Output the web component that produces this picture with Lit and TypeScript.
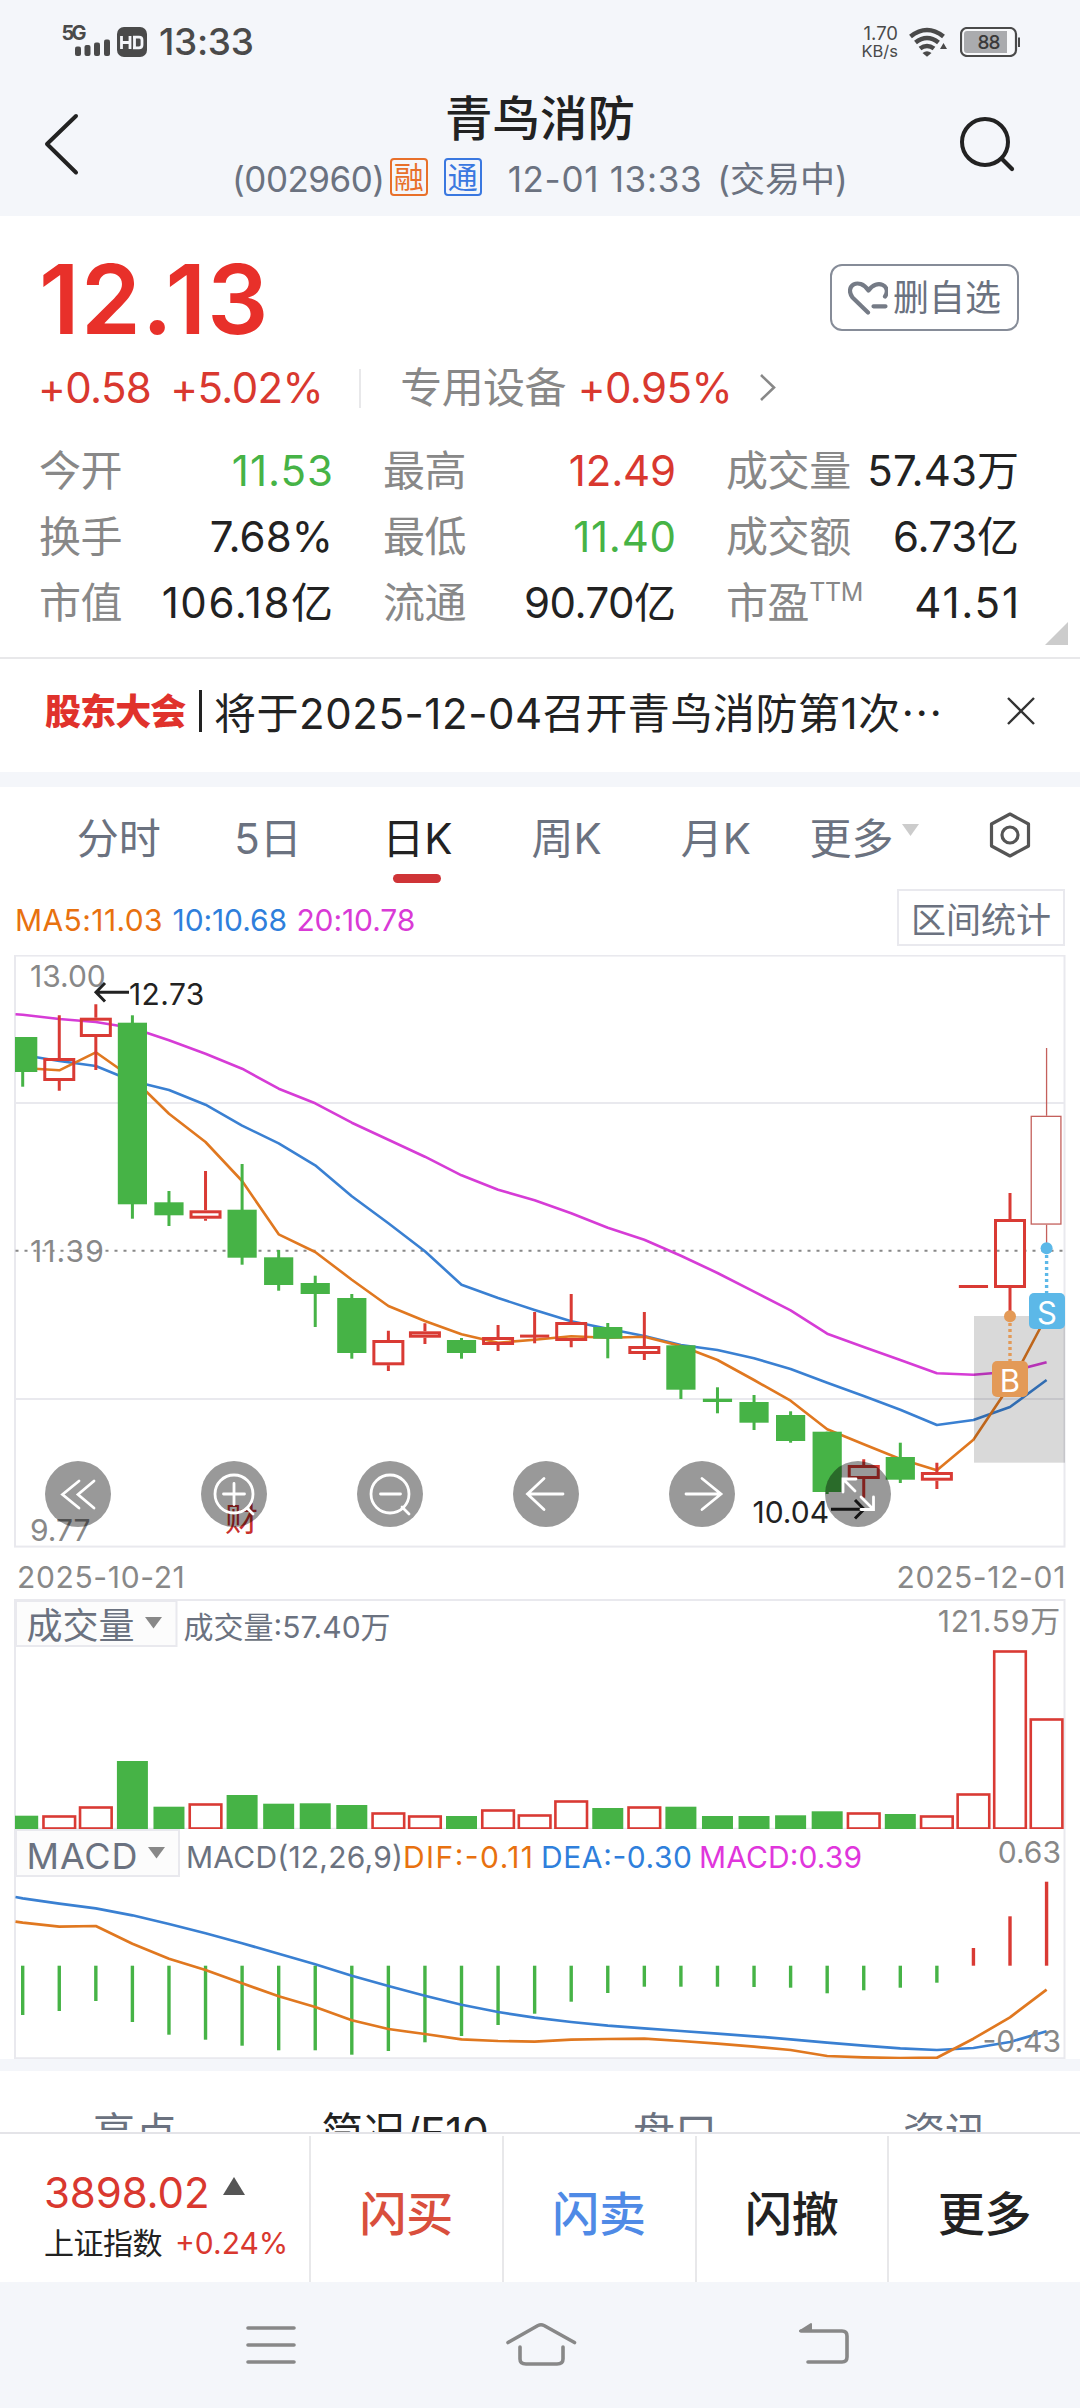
import { LitElement, html, svg, css } from "lit";
import { customElement } from "lit/decorators.js";
import { classMap } from "lit/directives/class-map.js";
import { styleMap } from "lit/directives/style-map.js";

const FIRST_X = 22.7;
const STEP = 36.567;
const PLOT_LEFT = 15;
const cx = (i: number) => FIRST_X + STEP * i;

const RED = "#d93a34";
const GREEN = "#46b346";

type Candle = {
  up: boolean;
  top: number;
  bottom: number;
  high: number;
  low: number;
  thin: boolean;
};

// Rows are [direction, body top, body bottom, wick top, wick bottom] in chart units.
const rawCandles: [string, number, number, number, number][] = [
  ["g", 1037, 1072, 1037, 1086.7],
  ["r", 1058, 1081, 1015.3, 1090.7],
  ["r", 1017.7, 1037, 1004.3, 1070],
  ["g", 1022.7, 1204.3, 1015.3, 1218.7],
  ["g", 1202.3, 1215.3, 1191, 1226],
  ["r", 1210.3, 1218.7, 1171, 1220.7],
  ["g", 1209.7, 1257.7, 1164, 1264.7],
  ["g", 1257.3, 1285, 1250, 1290.7],
  ["g", 1283, 1294, 1275.7, 1327],
  ["g", 1298, 1353, 1294, 1358.7],
  ["r", 1340, 1365.3, 1330.7, 1371],
  ["r", 1331.3, 1337.7, 1323.3, 1344],
  ["g", 1340, 1353, 1338, 1358.7],
  ["r", 1337, 1345, 1325, 1351],
  ["r", 1334.6, 1337.6, 1312, 1343.3],
  ["r", 1322, 1341, 1294, 1347.3],
  ["g", 1327, 1338.7, 1323, 1358.3],
  ["r", 1346, 1354, 1312, 1360],
  ["g", 1345.3, 1389.7, 1345, 1399],
  ["g", 1398.7, 1402, 1387.3, 1413.3],
  ["g", 1402, 1422.7, 1395, 1430],
  ["g", 1415, 1441, 1411.3, 1442.7],
  ["g", 1431.7, 1492, 1431.7, 1494],
  ["r", 1465, 1479, 1459.3, 1497.7],
  ["g", 1457, 1479.7, 1442.7, 1483],
  ["r", 1472, 1480.7, 1462.7, 1489],
  ["r", 1285, 1288, 1285, 1288],
  ["r", 1219, 1288, 1193, 1316],
  ["t", 1115.7, 1224.7, 1048, 1248],
];

const candles: Candle[] = rawCandles.map(([d, top, bottom, high, low]) => ({
  up: d !== "g",
  thin: d === "t",
  top,
  bottom,
  high,
  low,
}));

const ma5 = [1068, 1070.3, 1052.3, 1078, 1113.7, 1142, 1181, 1234.3, 1252, 1279.7, 1306, 1321, 1334.3, 1342.7, 1339.7, 1336.3, 1337.7, 1336.7, 1346, 1360, 1380, 1400.7, 1429.3, 1444.3, 1459, 1470.3, 1439.7, 1385, 1316];
const ma10 = [1055, 1061, 1066, 1081, 1090, 1104.7, 1125.7, 1143.3, 1165.3, 1196.3, 1223.3, 1251.3, 1284.7, 1298, 1310, 1321.3, 1328.7, 1336, 1345, 1350, 1358.3, 1369, 1382.7, 1396, 1409.7, 1425, 1420, 1407, 1380];
const ma20 = [1014.7, 1019, 1022, 1028, 1040.3, 1053.7, 1068.7, 1088.7, 1103.3, 1122.7, 1139.7, 1156.7, 1175.3, 1189.7, 1200.3, 1213.3, 1227.7, 1239.7, 1255.7, 1273, 1291.7, 1310.3, 1333.7, 1347, 1360, 1373.3, 1374.7, 1371.7, 1362.3];

const volumeTops = [1815.7, 1815, 1806, 1761, 1806.7, 1803, 1795, 1803.7, 1803.3, 1805, 1812, 1815, 1816, 1809, 1814, 1800, 1808, 1806, 1806.7, 1816, 1816, 1815.3, 1811.3, 1812, 1814, 1815, 1793, 1650, 1718];

const macdEnds = [2015, 2011, 2001, 2022, 2034.7, 2039.7, 2045.7, 2050.3, 2050.3, 2054.7, 2051, 2042.3, 2036, 2025, 2013.7, 2001.7, 1993, 1986.7, 1986.7, 1986.7, 1987, 1987.7, 1993.3, 1990.3, 1987.7, 1982.7, 1948, 1916.3, 1881.7];
const dea = [1898.3, 1903.7, 1908.3, 1915.3, 1924, 1933.3, 1943.3, 1953.7, 1964.3, 1975.7, 1986, 1995.7, 2004.7, 2012, 2017.7, 2022, 2025.7, 2028.3, 2031, 2033.7, 2036.3, 2039.3, 2042.7, 2045.7, 2048.3, 2050, 2048, 2042, 2031.3];
const dif = [1922.7, 1926.7, 1926, 1943.7, 1958.7, 1970, 1983.3, 1996.3, 2007, 2020.3, 2029, 2034, 2039.3, 2041, 2041.7, 2039.7, 2039, 2038.7, 2041, 2043.7, 2046.7, 2050, 2056, 2057.3, 2058, 2057.7, 2038.7, 2017.3, 1989.7];

const path = (ys: number[], startY: number) =>
  `M15.5 ${startY}` + ys.map((y, i) => `L${cx(i).toFixed(1)} ${y}`).join("");

const fonts = css`
  :host {
    font-family: Inter, "Noto Sans CJK SC", sans-serif;
  }
  svg {
    display: block;
  }
  text {
    font-family: Inter, "Noto Sans CJK SC", sans-serif;
  }
`;

@customElement("price-chart")
export class PriceChart extends LitElement {
  static styles = [
    fonts,
    css`
      :host {
        display: block;
        position: relative;
        height: 593px;
      }
      .controls {
        position: absolute;
        left: 45px;
        top: 506px;
        display: flex;
        gap: 90px;
      }
      .control {
        width: 66px;
        height: 66px;
        border-radius: 50%;
        background: rgba(0, 0, 0, 0.4);
      }
      .axis {
        fill: #888;
        font-size: 30px;
      }
      .mid {
        letter-spacing: 1.1px;
      }
      .mark {
        fill: #222;
        font-size: 30px;
      }
      .event {
        fill: #c8302c;
        font-size: 33px;
      }
      .badge {
        fill: #fff;
        font-size: 31px;
        text-anchor: middle;
      }
    `,
  ];

  private candle(c: Candle, i: number) {
    const x = cx(i);
    if (!c.up) {
      const left = Math.max(x - 14.6, PLOT_LEFT);
      return svg`<g fill=${GREEN}>
        <rect x=${x - 1.5} y=${c.high} width="3" height=${c.low - c.high}></rect>
        <rect x=${left} y=${c.top} width=${x + 14.6 - left} height=${c.bottom - c.top}></rect>
      </g>`;
    }
    const w = c.thin ? 1.3 : 3;
    const color = c.thin ? "#c4605c" : RED;
    if (c.bottom - c.top < 4) {
      return svg`<g fill=${color}>
        <rect x=${x - 14.6} y=${c.top} width="29.2" height="3"></rect>
        <rect x=${x - 1.5} y=${c.high} width="3" height=${c.low - c.high}></rect>
      </g>`;
    }
    return svg`<g fill="none" stroke=${color} stroke-width=${w}>
      <rect x=${x - 16 + w / 2} y=${c.top + w / 2} width=${(c.thin ? 31 : 32) - w} height=${c.bottom - c.top - w}></rect>
      <path d="M${x} ${c.high}V${c.top}M${x} ${c.bottom}V${c.low}"></path>
    </g>`;
  }

  private controlIcons = [
    svg`<path d="M34 20L17.500 33.500L34 47M49 20L33 33.500L49 47"></path>`,
    svg`<circle cx="33" cy="33" r="19"></circle><path d="M33 22.500V43.500M22.500 33H43.500M46 47L52 53"></path>`,
    svg`<circle cx="33" cy="33" r="19"></circle><path d="M23.500 33H43.500M45 46L52 53"></path>`,
    svg`<path d="M31 17.500L14.500 33L31 48.500M14.500 33H50"></path>`,
    svg`<path d="M33 17.500L52 33L33 48.500M17 33H50"></path>`,
    svg`<path d="M31 18H18V31M18 18L30 30M36 36L48 48M48.500 36V48.500H36"></path>`,
  ];

  render() {
    return html`
      <svg width="1080" height="593" viewBox="0 955 1080 593">
        <g fill="none" stroke="#e9e9ee" stroke-width="2">
          <path d="M15 1103H1064M15 1399H1064"></path>
          <rect x="15" y="955.600" width="1049.500" height="591"></rect>
        </g>
        <path d="M15.500 1250.700H1064" stroke="#888" stroke-width="2" stroke-dasharray="3 6"></path>
        <g fill="none" stroke-width="2.600" stroke-linejoin="round">
          <path d=${path(ma20, 1014.3)} stroke="#d63cd6"></path>
          <path d=${path(ma10, 1053)} stroke="#3a80d2"></path>
          <path d=${path(ma5, 1067)} stroke="#e07820"></path>
        </g>
        ${candles.map((c, i) => this.candle(c, i))}
        <text class="axis" x="30" y="986.700">13.00</text>
        <text class="axis mid" x="30" y="1262">11.39</text>
        <text class="axis" x="30" y="1540.700">9.77</text>
        <text class="event" x="225" y="1531">财</text>
        <g fill="none" stroke="#222" stroke-width="3">
          <path d="M129 992.300H96M105 983L96 992.300L105 1001.500"></path>
          <path d="M831 1509.300H862M855 1500L864 1509.300L855 1518.500"></path>
        </g>
        <text class="mark" x="129" y="1004.700" letter-spacing="0.4">12.73</text>
        <text class="mark" x="752.500" y="1523">10.04</text>
        <rect x="974" y="1316" width="91" height="146.700" fill="#000" fill-opacity="0.15"></rect>
        <g stroke-width="3.400" stroke-dasharray="3 3">
          <path d="M1010 1323V1361" stroke="#e39a57"></path>
          <path d="M1046.600 1255V1293" stroke="#5cb8e8"></path>
        </g>
        <circle cx="1010" cy="1316.300" r="6" fill="#e39a57"></circle>
        <circle cx="1046.600" cy="1248.300" r="6" fill="#5cb8e8"></circle>
        <rect x="992" y="1361" width="36" height="36" rx="5" fill="#e39a57"></rect>
        <rect x="1029" y="1293" width="36" height="36" rx="5" fill="#5cb8e8"></rect>
        <text class="badge" x="1010" y="1391.500">B</text>
        <text class="badge" x="1047" y="1324">S</text>
      </svg>
      <div class="controls">
        ${this.controlIcons.map(
          (icon) => html`<div class="control">
            <svg width="66" height="66" viewBox="0 0 66 66" fill="none" stroke="#fff" stroke-width="2.800" stroke-linecap="round">${icon}</svg>
          </div>`
        )}
      </div>
    `;
  }
}

@customElement("volume-chart")
export class VolumeChart extends LitElement {
  static styles = [
    fonts,
    css`
      :host {
        display: block;
        height: 230px;
      }
      .pick {
        fill: #6b7280;
        font-size: 36px;
      }
      .legend {
        fill: #6b7280;
        font-size: 30px;
      }
      .axis {
        fill: #888;
        font-size: 30px;
        letter-spacing: 0.8px;
        text-anchor: end;
      }
    `,
  ];

  render() {
    return html`<svg width="1080" height="230" viewBox="0 1599 1080 230">
      <path d="M15 1829V1600H1064.500V1829" fill="none" stroke="#e9e9ee" stroke-width="2"></path>
      <path d="M15 1828.500H1064.500" stroke="#e9e9ee" stroke-width="1.500"></path>
      <rect x="16" y="1601" width="160.500" height="45" fill="#fcfcfc" stroke="#e9e9ee" stroke-width="2"></rect>
      <text class="pick" x="26.500" y="1638.500">成交量</text>
      <path d="M145 1617H162L153.500 1628.500Z" fill="#888"></path>
      <text class="legend" x="183.500" y="1637.500">成交量:57.40万</text>
      <text class="axis" x="1061" y="1632">121.59万</text>
      ${volumeTops.map((top, i) => {
        const left = Math.max(cx(i) - 15.5, PLOT_LEFT);
        return candles[i].up
          ? svg`<rect x=${cx(i) - 15.8} y=${top + 1.5} width="31.600" height=${1827 - top} fill="#fff" stroke=${RED} stroke-width="2.600"></rect>`
          : svg`<rect x=${left} y=${top} width=${cx(i) + 15.5 - left} height=${1829 - top} fill=${GREEN}></rect>`;
      })}
    </svg>`;
  }
}

@customElement("macd-chart")
export class MacdChart extends LitElement {
  static styles = [
    fonts,
    css`
      :host {
        display: block;
        height: 230px;
      }
      .pick {
        fill: #6b7280;
        font-size: 36px;
      }
      .legend {
        fill: #6b7280;
        font-size: 30px;
      }
      .dif {
        fill: #e8710f;
      }
      .dea {
        fill: #2f7fdc;
      }
      .macd {
        fill: #e036dc;
      }
      .axis {
        fill: #888;
        font-size: 30px;
        text-anchor: end;
      }
    `,
  ];

  render() {
    return html`<svg width="1080" height="230" viewBox="0 1829 1080 230">
      <path d="M15 1829V2058.300H1064.500V1829" fill="none" stroke="#e9e9ee" stroke-width="2"></path>
      <rect x="16" y="1830" width="163" height="46" fill="#fcfcfc" stroke="#e9e9ee" stroke-width="2"></rect>
      <text class="pick" x="26.500" y="1868.500" textLength="111">MACD</text>
      <path d="M148 1847H165L156.500 1858.500Z" fill="#888"></path>
      <text class="legend" x="186" y="1868" textLength="217">MACD(12,26,9)</text>
      <text class="legend dif" x="403" y="1868" textLength="130">DIF:-0.11</text>
      <text class="legend dea" x="541" y="1868" textLength="151">DEA:-0.30</text>
      <text class="legend macd" x="699" y="1868" textLength="163">MACD:0.39</text>
      <text class="axis" x="1061" y="1862.500">0.63</text>
      ${macdEnds.map(
        (y, i) =>
          svg`<path d="M${cx(i)} 1965.700V${y}" stroke=${y > 1965.7 ? GREEN : RED} stroke-width="3.400"></path>`
      )}
      <g fill="none" stroke-width="2.700" stroke-linejoin="round">
        <path d=${path(dea, 1897)} stroke="#3a80d2"></path>
        <path d=${path(dif, 1921.7)} stroke="#e07820"></path>
      </g>
      <text class="axis" x="1061" y="2052">-0.43</text>
    </svg>`;
  }
}

// spread is the extra space between the characters of a value, in px.
const stats = [
  { label: "今开", value: "11.53", tone: "down", spread: 1 },
  { label: "最高", value: "12.49", tone: "up", spread: -0.2 },
  { label: "成交量", value: "57.43万", tone: "", spread: 0.1 },
  { label: "换手", value: "7.68%", tone: "", spread: 0.1 },
  { label: "最低", value: "11.40", tone: "down", spread: 0.7 },
  { label: "成交额", value: "6.73亿", tone: "", spread: -0.3 },
  { label: "市值", value: "106.18亿", tone: "", spread: 1.6 },
  { label: "流通", value: "90.70亿", tone: "", spread: -0.5 },
  { label: "市盈", sup: "TTM", value: "41.51", tone: "", spread: 1.8 },
];

@customElement("app-root")
export class AppRoot extends LitElement {
  static styles = [
    fonts,
    css`
      :host {
        display: block;
        width: 1080px;
        height: 2408px;
        overflow: hidden;
        background: #f4f6fa;
        color: #222;
      }
      .row {
        display: flex;
        align-items: center;
      }
      .up {
        color: #d9382f;
      }
      .down {
        color: #46b346;
      }
      .status {
        height: 84px;
        box-sizing: border-box;
        padding: 0 60px;
        justify-content: space-between;
      }
      .clock {
        font-size: 37px;
        line-height: 40px;
        color: #4a4a4a;
        font-weight: 500;
        letter-spacing: -0.3px;
        margin-left: 9px;
      }
      .rate {
        font-size: 18.500px;
        line-height: 17px;
        color: #4a4a4a;
        text-align: right;
        margin-right: 10px;
      }
      .unit {
        font-size: 16.500px;
      }
      .gap {
        margin-right: 12px;
      }
      .header {
        height: 132px;
        box-sizing: border-box;
        padding: 0 63px 0 40px;
        justify-content: space-between;
        align-items: flex-start;
      }
      .title-box {
        flex: 1;
        text-align: center;
        padding: 8px 0 0 41px;
      }
      .title {
        font-size: 47.500px;
        line-height: 54px;
        font-weight: 500;
      }
      .sub {
        justify-content: center;
        margin-top: 11px;
        height: 44px;
        font-size: 35px;
        line-height: 44px;
        color: #6b7280;
      }
      .code {
        letter-spacing: -0.5px;
      }
      .tag {
        box-sizing: border-box;
        width: 38px;
        height: 38px;
        border: 2px solid;
        border-radius: 4px;
        font-size: 30px;
        line-height: 34px;
        text-align: center;
        margin: -4px 0 0 5px;
      }
      .rong {
        color: #e8702a;
      }
      .tong {
        color: #3a78e0;
        margin-left: 16px;
      }
      .time {
        margin-left: 26px;
        letter-spacing: 0.7px;
      }
      .state {
        margin-left: 15px;
      }
      .icon-back {
        margin-top: 26px;
      }
      .icon-search {
        margin-top: 30px;
      }
      .quote {
        position: relative;
        box-sizing: border-box;
        height: 443px;
        background: #fff;
        border-bottom: 2px solid #e8e8ea;
        padding: 38px 61px 0 39px;
      }
      .price-row {
        height: 90px;
        justify-content: space-between;
      }
      .price {
        font-size: 96px;
        line-height: 90px;
        font-weight: 600;
        color: #e8302a;
        letter-spacing: 1.3px;
      }
      .watch {
        box-sizing: border-box;
        width: 189px;
        height: 67px;
        border: 2px solid #868c98;
        border-radius: 12px;
        font-size: 36px;
        line-height: 62px;
        color: #6b7280;
        padding-left: 16px;
        gap: 5px;
        margin-top: -3px;
      }
      .change {
        margin: 22px 0 0 -1px;
        height: 44px;
        font-size: 42px;
        line-height: 44px;
        letter-spacing: -0.6px;
      }
      .pct {
        margin-left: 19px;
      }
      .divider {
        width: 2px;
        height: 39px;
        background: #e8e8ea;
        margin: 0 39px 0 36px;
      }
      .label {
        color: #888;
      }
      .sector {
        margin: 0 12px 0 0;
      }
      .go {
        margin-left: 27px;
      }
      .stats {
        margin-top: 28px;
        display: grid;
        grid-template-columns: 294px 293px 293px;
        column-gap: 50px;
        grid-auto-rows: 66px;
        font-size: 42px;
        line-height: 66px;
      }
      .stat {
        display: flex;
        justify-content: space-between;
      }
      .stat .label {
        letter-spacing: -0.4px;
      }
      .sup {
        font-size: 25px;
        line-height: 20px;
        vertical-align: 17px;
      }
      .corner {
        position: absolute;
        right: 12px;
        bottom: 12px;
      }
      .notice {
        height: 113px;
        box-sizing: border-box;
        background: #fff;
        padding: 0 45px 9px 45px;
      }
      .notice-tag {
        font-size: 36px;
        line-height: 42px;
        font-weight: 900;
        color: #e0322c;
        letter-spacing: -0.9px;
        margin-top: 2px;
      }
      .bar {
        width: 2.500px;
        height: 42px;
        background: #222;
        margin: 0 12px 0 14px;
      }
      .notice-text {
        flex: 1;
        font-size: 42px;
        line-height: 48px;
        letter-spacing: 0.55px;
        margin-top: 6px;
        white-space: nowrap;
      }
      .charts {
        margin-top: 15px;
        background: #fff;
        height: 1272px;
      }
      .periods {
        height: 100px;
        box-sizing: border-box;
        padding-left: 44px;
        align-items: flex-start;
      }
      .period {
        width: 149.300px;
        padding-top: 27px;
        font-size: 42px;
        line-height: 50px;
        text-align: center;
        color: #6b7280;
      }
      .period.active {
        color: #222;
      }
      .period.active::after {
        content: "";
        display: block;
        width: 48px;
        height: 9px;
        border-radius: 4.500px;
        background: #cf3437;
        margin: 10px auto 0;
      }
      .more {
        padding-top: 27px;
        width: 199px;
        box-sizing: border-box;
        padding-left: 19px;
        display: flex;
        gap: 8px;
        font-size: 42px;
        line-height: 50px;
        color: #6b7280;
      }
      .down-tri {
        margin-top: 10px;
      }
      .hex {
        margin-top: 24px;
      }
      .ma-row {
        height: 68px;
        box-sizing: border-box;
        padding: 2px 15px 0 15px;
        align-items: flex-start;
        justify-content: space-between;
      }
      .ma {
        display: flex;
        gap: 9.500px;
        font-size: 30px;
        line-height: 62px;
        letter-spacing: -0.1px;
      }
      .c5 {
        color: #e8710f;
        letter-spacing: 0.4px;
      }
      .c10 {
        color: #2f7fdc;
      }
      .c20 {
        color: #d93ad6;
      }
      .range {
        box-sizing: border-box;
        width: 168px;
        height: 57px;
        border: 2px solid #e9e9ee;
        font-size: 35px;
        line-height: 59px;
        text-align: center;
        color: #6b7280;
      }
      .dates {
        height: 51px;
        box-sizing: border-box;
        padding: 7px 14px 0 17px;
        display: flex;
        justify-content: space-between;
        font-size: 30px;
        line-height: 44px;
        letter-spacing: 0.65px;
        color: #888;
      }
      .sections {
        margin-top: 12px;
        height: 61px;
        overflow: hidden;
        background: #fff;
        display: flex;
        font-size: 42px;
        line-height: 50px;
        color: #6b7280;
      }
      .section {
        flex: 1;
        padding-top: 37px;
        text-align: center;
      }
      .section.active {
        color: #222;
      }
      .dock {
        height: 150px;
        box-sizing: border-box;
        border-top: 2px solid #e4e4e8;
        background: #fff;
        display: flex;
      }
      .index {
        width: 309px;
        padding: 38px 0 0 44px;
        box-sizing: border-box;
      }
      .index-top {
        display: flex;
        gap: 14px;
        font-size: 42px;
        line-height: 42px;
        letter-spacing: -0.1px;
      }
      .index-bottom {
        display: flex;
        gap: 13px;
        font-size: 30px;
        line-height: 30px;
        margin-top: 14px;
      }
      .index-name {
        letter-spacing: -0.5px;
      }
      .index-tri {
        margin-top: -15px;
      }
      .act {
        flex: 1;
        margin-top: 2px;
        border-left: 2px solid #e8e8ea;
        font-size: 47px;
        line-height: 156px;
        height: 146px;
        font-weight: 500;
        text-align: center;
      }
      .buy {
        color: #d94f3d;
      }
      .sell {
        color: #4f8ae6;
      }
    `,
  ];

  private periods = ["分时", "5日", "日K", "周K", "月K"];
  private sections = ["亮点", "简况/F10", "盘口", "资讯"];

  render() {
    return html`
      <div class="row status">
        <div class="row">
          <svg width="90" height="44" viewBox="60 20 90 44">
            <text x="61.500" y="39.500" font-size="20" font-weight="700" fill="#4a4a4a" textLength="25">5G</text>
            <g fill="#4a4a4a">
              <rect x="75" y="46.500" width="6" height="9.500" rx="2"></rect>
              <rect x="84.500" y="45" width="6" height="11" rx="2"></rect>
              <rect x="94" y="42.500" width="6" height="13.500" rx="2"></rect>
              <rect x="104" y="39.500" width="6" height="16.500" rx="2"></rect>
              <rect x="117" y="27" width="30" height="30" rx="7"></rect>
            </g>
            <path d="M121.500 36V49M130 36V49M121.500 42.500H130M134.500 36V49M133 37.200H139Q142 37.200 142 40V45Q142 47.800 139 47.800H133" fill="none" stroke="#f4f6fa" stroke-width="2.800"></path>
          </svg>
          <div class="clock">13:33</div>
        </div>
        <div class="row">
          <div class="rate">1.70<br /><span class="unit">KB/s</span></div>
          <svg class="gap" width="40" height="30" viewBox="909 27 40 30">
            <g fill="none" stroke="#4a4a4a" stroke-width="4.600">
              <path d="M911.500 36.500Q928 23.500 944.500 36.500"></path>
              <path d="M916.500 42.500Q928 33.500 939.500 42.500"></path>
              <path d="M921 48.500Q928 43.500 935 48.500"></path>
            </g>
            <path d="M923.500 53Q928 49.500 932.500 53L928 56.800ZM941 49L944.500 43L948 49Z" fill="#4a4a4a"></path>
          </svg>
          <svg width="60" height="30" viewBox="960 27 60 30">
            <rect x="961" y="28" width="55" height="28" rx="6" fill="#f8f9fb" stroke="#4a4a4a" stroke-width="2.200"></rect>
            <path d="M967 31H1007V53H967Q964 53 964 50V34Q964 31 967 31Z" fill="#aaabae"></path>
            <path d="M1019 37.500V47" stroke="#4a4a4a" stroke-width="2"></path>
            <text x="989" y="48.700" font-size="19" font-weight="500" fill="#3a3a3a" text-anchor="middle" textLength="23">88</text>
          </svg>
        </div>
      </div>

      <div class="row header">
        <svg class="icon-back" width="42" height="68" viewBox="40 110 42 68">
          <path d="M76 116L47 144L76 172.500" fill="none" stroke="#222" stroke-width="4" stroke-linecap="round" stroke-linejoin="round"></path>
        </svg>
        <div class="title-box">
          <div class="title">青鸟消防</div>
          <div class="row sub">
            <span class="code">(002960)</span>
            <span class="tag rong">融</span>
            <span class="tag tong">通</span>
            <span class="time">12-01 13:33</span>
            <span class="state">(交易中)</span>
          </div>
        </div>
        <svg class="icon-search" width="60" height="60" viewBox="957 114 60 60">
          <circle cx="985" cy="142" r="23" fill="none" stroke="#222" stroke-width="4"></circle>
          <path d="M1002 159L1012 169" stroke="#222" stroke-width="4.200" stroke-linecap="round"></path>
        </svg>
      </div>

      <div class="quote">
        <div class="row price-row">
          <div class="price">12.13</div>
          <div class="row watch">
            <svg width="40" height="36" viewBox="848 279 40 36">
              <path d="M868 311.500L852.500 296.500C844 285 859 275.500 868.500 289.500C877 277 892 285 885 295.500M873.500 305.300H885.500" fill="none" stroke="#757b86" stroke-width="4.200" stroke-linecap="round" stroke-linejoin="round"></path>
            </svg>
            <span>删自选</span>
          </div>
        </div>
        <div class="row change">
          <span class="up">+0.58</span>
          <span class="up pct">+5.02%</span>
          <span class="divider"></span>
          <span class="label sector">专用设备</span>
          <span class="up">+0.95%</span>
          <svg class="go" width="18" height="30" viewBox="0 0 18 30">
            <path d="M2 2L15 14.500L2 27" fill="none" stroke="#888" stroke-width="2.600"></path>
          </svg>
        </div>
        <div class="stats">
          ${stats.map(
            (s) => html`<div class="stat">
              <span class="label">${s.label}${s.sup ? html`<span class="sup">${s.sup}</span>` : ""}</span>
              <span
                class=${classMap({ up: s.tone === "up", down: s.tone === "down" })}
                style=${styleMap({ letterSpacing: `${s.spread}px`, marginRight: `${-s.spread}px` })}
                >${s.value}</span
              >
            </div>`
          )}
        </div>
        <svg class="corner" width="23" height="23" viewBox="0 0 23 23"><path d="M23 0V23H0Z" fill="#ccc"></path></svg>
      </div>

      <div class="row notice">
        <span class="notice-tag">股东大会</span>
        <span class="bar"></span>
        <span class="notice-text">将于2025-12-04召开青鸟消防第1次⋯</span>
        <svg width="28" height="28" viewBox="0 0 28 28">
          <path d="M1 1L27 27M27 1L1 27" stroke="#333" stroke-width="2.400"></path>
        </svg>
      </div>

      <div class="charts">
        <div class="row periods">
          ${this.periods.map(
            (p) => html`<div class=${classMap({ period: true, active: p === "日K" })}>${p}</div>`
          )}
          <div class="more">
            更多
            <svg class="down-tri" width="17" height="12" viewBox="0 0 17 12"><path d="M0 0H17L8.500 12Z" fill="#ccc"></path></svg>
          </div>
          <svg class="hex" width="42" height="48" viewBox="0 0 42 48" fill="none" stroke="#555" stroke-width="3.200" stroke-linejoin="round">
            <path d="M21 3L39.500 13V35L21 45L2.500 35V13Z"></path>
            <circle cx="21" cy="24" r="8"></circle>
          </svg>
        </div>
        <div class="row ma-row">
          <div class="ma">
            <span class="c5">MA5:11.03</span><span class="c10">10:10.68</span><span class="c20">20:10.78</span>
          </div>
          <div class="range">区间统计</div>
        </div>
        <price-chart></price-chart>
        <div class="dates"><span>2025-10-21</span><span>2025-12-01</span></div>
        <volume-chart></volume-chart>
        <macd-chart></macd-chart>
      </div>

      <div class="sections">
        ${this.sections.map(
          (s) => html`<div class=${classMap({ section: true, active: s === "简况/F10" })}>${s}</div>`
        )}
      </div>

      <div class="dock">
        <div class="index">
          <div class="row index-top">
            <span class="up">3898.02</span>
            <svg class="index-tri" width="22" height="18" viewBox="0 0 22 18"><path d="M11 0L22 18H0Z" fill="#555"></path></svg>
          </div>
          <div class="row index-bottom">
            <span class="index-name">上证指数</span><span class="up">+0.24%</span>
          </div>
        </div>
        <div class="act buy">闪买</div>
        <div class="act sell">闪卖</div>
        <div class="act">闪撤</div>
        <div class="act">更多</div>
      </div>

      <svg width="1080" height="126" viewBox="0 2282 1080 126" fill="none" stroke="#888" stroke-width="3.600" stroke-linecap="round" stroke-linejoin="round">
        <path d="M248 2328H294M248 2345H294M248 2362H294"></path>
        <path d="M508 2342.500L538 2325.500Q541 2324 544 2325.500L574.500 2342.500M520 2347V2359Q520 2364 526 2364H557Q563 2364 563 2359V2347"></path>
        <path d="M808 2362H842Q847 2362 847 2357V2336Q847 2331 842 2331H801"></path>
        <path d="M811 2324V2331H800Z" fill="#888" stroke-width="2"></path>
      </svg>
    `;
  }
}
